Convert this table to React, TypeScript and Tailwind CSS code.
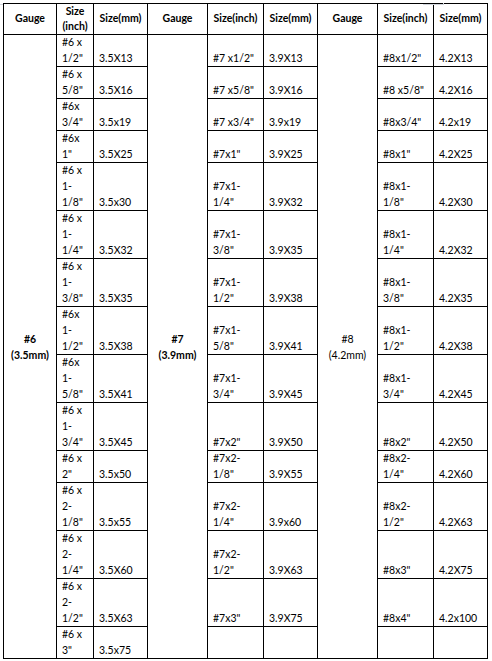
const groups = [
  {
    gauge: ["#6", "(3.5mm)"],
    rows: [
      [["#6 x", "1/2\""], "3.5X13"],
      [["#6 x", "5/8\""], "3.5X16"],
      [["#6x", "3/4\""], "3.5x19"],
      [["#6x", "1\""], "3.5X25"],
      [["#6 x", "1-", "1/8\""], "3.5x30"],
      [["#6 x", "1-", "1/4\""], "3.5X32"],
      [["#6 x", "1-", "3/8\""], "3.5X35"],
      [["#6x", "1-", "1/2\""], "3.5X38"],
      [["#6x", "1-", "5/8\""], "3.5X41"],
      [["#6 x", "1-", "3/4\""], "3.5X45"],
      [["#6 x", "2\""], "3.5x50"],
      [["#6 x", "2-", "1/8\""], "3.5x55"],
      [["#6 x", "2-", "1/4\""], "3.5X60"],
      [["#6 x", "2-", "1/2\""], "3.5X63"],
      [["#6 x", "3\""], "3.5x75"],
    ],
  },
  {
    gauge: ["#7", "(3.9mm)"],
    rows: [
      [["#7 x1/2\""], "3.9X13"],
      [["#7 x5/8\""], "3.9X16"],
      [["#7 x3/4\""], "3.9x19"],
      [["#7x1\""], "3.9X25"],
      [["#7x1-", "1/4\""], "3.9X32"],
      [["#7x1-", "3/8\""], "3.9X35"],
      [["#7x1-", "1/2\""], "3.9X38"],
      [["#7x1-", "5/8\""], "3.9X41"],
      [["#7x1-", "3/4\""], "3.9X45"],
      [["#7x2\""], "3.9X50"],
      [["#7x2-", "1/8\""], "3.9X55"],
      [["#7x2-", "1/4\""], "3.9x60"],
      [["#7x2-", "1/2\""], "3.9X63"],
      [["#7x3\""], "3.9X75"],
      [[], ""],
    ],
  },
  {
    gauge: ["#8", "(4.2mm)"],
    rows: [
      [["#8x1/2\""], "4.2X13"],
      [["#8 x5/8\""], "4.2X16"],
      [["#8x3/4\""], "4.2x19"],
      [["#8x1\""], "4.2X25"],
      [["#8x1-", "1/8\""], "4.2X30"],
      [["#8x1-", "1/4\""], "4.2X32"],
      [["#8x1-", "3/8\""], "4.2X35"],
      [["#8x1-", "1/2\""], "4.2X38"],
      [["#8x1-", "3/4\""], "4.2X45"],
      [["#8x2\""], "4.2X50"],
      [["#8x2-", "1/4\""], "4.2X60"],
      [["#8x2-", "1/2\""], "4.2X63"],
      [["#8x3\""], "4.2X75"],
      [["#8x4\""], "4.2x100"],
      [[], ""],
    ],
  },
] as const;

const gaugeCol = ["col-start-1", "col-start-4", "col-start-7"];

function Cell({ lines }: { lines: readonly string[] }) {
  return (
    <div className="flex flex-col justify-end border-r border-b border-black pl-[5px] leading-[16px] whitespace-nowrap">
      {lines.map((l, i) => (
        <span key={i}>{l}</span>
      ))}
    </div>
  );
}

export default function App() {
  return (
    <div className="relative h-[661px] w-[492px] bg-white font-['Lato',sans-serif] text-[10.5px] text-black">
      {/* page marks */}
      <div className="absolute left-0 top-[1px] h-px w-[3px] bg-gray-300" />
      <div className="absolute left-[423px] top-[1px] h-px w-[20px] bg-gray-300" />
      <div className="absolute left-[443px] top-0 h-[2px] w-px bg-gray-300" />

      <div className="ml-[3px] mt-[3px] grid w-[485px] grid-cols-[53px_37px_54px_60px_56px_54px_60px_56px_54px] grid-rows-[31px_repeat(4,32px)_repeat(6,48px)_32px_repeat(3,48px)_32px] border-l border-t border-black">
        {/* Header */}
        <div className="flex items-center justify-center border-r border-b border-black font-bold">Gauge</div>
        <div className="flex flex-col items-center justify-center border-r border-b border-black font-bold leading-[15px]">
          <span>Size</span>
          <span>(inch)</span>
        </div>
        <div className="flex items-center justify-center border-r border-b border-black font-bold">Size(mm)</div>
        <div className="flex items-center justify-center border-r border-b border-black font-bold">Gauge</div>
        <div className="flex items-center justify-center border-r border-b border-black font-bold">Size(inch)</div>
        <div className="flex items-center justify-center border-r border-b border-black font-bold">Size(mm)</div>
        <div className="flex items-center justify-center border-r border-b border-black font-bold">Gauge</div>
        <div className="flex items-center justify-center border-r border-b border-black font-bold">Size(inch)</div>
        <div className="flex items-center justify-center border-r border-b border-black font-bold">Size(mm)</div>

        {/* Gauge cells spanning the body */}
        {groups.map((g, i) => (
          <div
            key={g.gauge[0]}
            className={`${gaugeCol[i]} row-start-2 row-span-15 flex flex-col items-center justify-center border-r border-b border-black leading-[16px] ${i === 2 ? "font-normal" : "font-bold"}`}
          >
            <span>{g.gauge[0]}</span>
            <span>{g.gauge[1]}</span>
          </div>
        ))}

        {/* Body rows */}
        {groups[0].rows.map((_, r) =>
          groups.map((g, gi) => [
            <Cell key={`s${gi}-${r}`} lines={g.rows[r][0]} />,
            <Cell key={`m${gi}-${r}`} lines={g.rows[r][1] ? [g.rows[r][1]] : []} />,
          ])
        )}
      </div>
    </div>
  );
}
